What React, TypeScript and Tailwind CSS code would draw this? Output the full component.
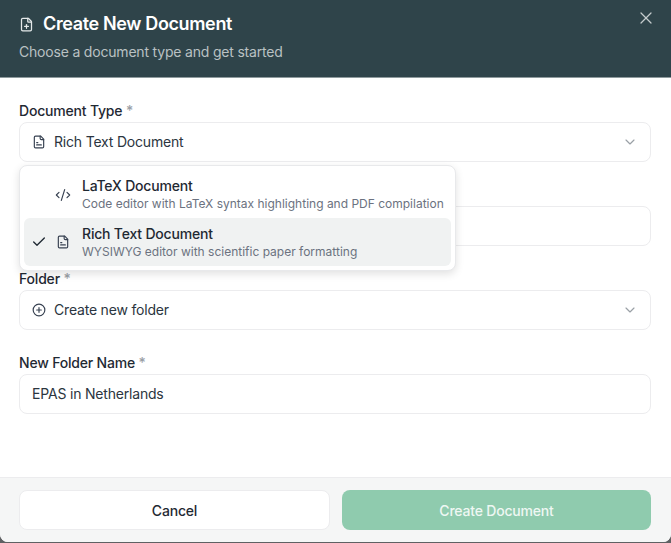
import { Check, ChevronDown, CodeXml, FilePlus, X } from "lucide-react";

function Label({ text }: { text?: string }) {
  return (
    <div className="h-[18px] text-[14px] leading-[18px] font-medium text-[#1f2933]">
      {text ? (
        <>
          {text} <span className="text-[#9aa0a6]">*</span>
        </>
      ) : null}
    </div>
  );
}

function RichIcon({ className }: { className: string }) {
  return (
    <svg viewBox="0 0 24 24" fill="none" stroke="currentColor" strokeWidth="2" strokeLinecap="round" strokeLinejoin="round" className={className}>
      <path d="M15 2H6a2 2 0 0 0-2 2v16a2 2 0 0 0 2 2h12a2 2 0 0 0 2-2V7Z" />
      <path d="M14 2v4a2 2 0 0 0 2 2h4" />
      <path d="M8 17h8" />
      <path d="M8 13h2" />
    </svg>
  );
}

function PlusCircle() {
  return (
    <svg viewBox="0 0 24 24" fill="none" stroke="currentColor" strokeWidth="2" strokeLinecap="round" className="w-[14px] h-[14px] text-[#374151]">
      <circle cx="12" cy="12" r="10" />
      <path d="M8 12h8" />
      <path d="M12 8v8" />
    </svg>
  );
}

function Box({ children }: { children: React.ReactNode }) {
  return (
    <div className="mt-[2px] h-[40px] rounded-[8px] border border-[#ececee] bg-white flex items-center justify-between pl-[12px] pr-[12px] pb-[1px] text-[14px] text-[#2b3540]">
      {children}
    </div>
  );
}

export default function App() {
  return (
    <div className="w-[671px] h-[543px] bg-[#5f6163] overflow-hidden tracking-[-0.012em]" style={{ fontFamily: "Inter, 'Liberation Sans', sans-serif" }}>
      <div className="relative w-[671px] h-[542px] bg-white rounded-b-[8px] overflow-hidden flex flex-col">
        <header className="h-[78px] shrink-0 bg-[#2f444a] border-b border-[#8e9a9d] pl-[19px] pr-[19px] pt-[13px] relative">
          <div className="flex items-center gap-[9px] h-[22px]">
            <FilePlus className="w-[15px] h-[15px] text-[#e5e9ea]" strokeWidth={2} />
            <span className="text-[18px] leading-[22px] font-semibold text-white tracking-[-0.02em]">Create New Document</span>
          </div>
          <div className="mt-[8px] text-[14px] leading-[18px] text-[#b9c1c3]">Choose a document type and get started</div>
          <X className="absolute right-[15px] top-[8px] w-[20px] h-[20px] text-[#c5cccd]" strokeWidth={1.5} />
        </header>

        <main className="flex-1 pl-[19px] pr-[20px] pt-[24px] relative">
          <Label text="Document Type" />
          <Box>
            <span className="flex items-center gap-[8px]">
              <RichIcon className="w-[14px] h-[14px] text-[#374151]" />
              Rich Text Document
            </span>
            <ChevronDown className="w-[16px] h-[16px] text-[#9aa0a6]" strokeWidth={1.75} />
          </Box>

          <div className="mt-[24px]"><Label /></div>
          <Box><span /></Box>

          <div className="mt-[24px]"><Label text="Folder" /></div>
          <Box>
            <span className="flex items-center gap-[8px]">
              <PlusCircle />
              Create new folder
            </span>
            <ChevronDown className="w-[16px] h-[16px] text-[#9aa0a6]" strokeWidth={1.75} />
          </Box>

          <div className="mt-[24px]"><Label text="New Folder Name" /></div>
          <Box>EPAS in Netherlands</Box>

          <div className="absolute left-[19px] top-[87px] w-[437px] h-[106px] bg-white rounded-[8px] border border-[#e8e9eb] shadow-[0_3px_8px_rgba(0,0,0,0.12)] p-[4px]">
            <div className="h-[48px] flex items-center rounded-[6px]">
              <CodeXml className="w-[16px] h-[16px] mt-[1px] ml-[31px] text-[#374151]" strokeWidth={1.75} />
              <div className="ml-[11px]">
                <div className="text-[14px] leading-[18px] font-medium text-[#1f2933]">LaTeX Document</div>
                <div className="text-[12px] leading-[17px] tracking-normal text-[#6b7280]">Code editor with LaTeX syntax highlighting and PDF compilation</div>
              </div>
            </div>
            <div className="h-[48px] flex items-center rounded-[6px] bg-[#f0f2f2]">
              <Check className="w-[16px] h-[16px] ml-[7px] text-[#1f2933]" strokeWidth={2} />
              <RichIcon className="w-[14px] h-[14px] ml-[9px] text-[#374151]" />
              <div className="ml-[12px]">
                <div className="text-[14px] leading-[18px] font-medium text-[#1f2933]">Rich Text Document</div>
                <div className="text-[12px] leading-[17px] tracking-normal text-[#6b7280]">WYSIWYG editor with scientific paper formatting</div>
              </div>
            </div>
          </div>
        </main>

        <footer className="h-[65px] shrink-0 bg-[#f5f6f6] border-t border-[#ececee] pl-[19px] pr-[20px] pt-[12px] flex gap-[12px]">
          <button className="flex-1 h-[40px] rounded-[8px] border border-[#ececee] bg-white text-[14px] font-medium text-[#1f2933]">Cancel</button>
          <button className="flex-1 h-[40px] rounded-[8px] bg-[#8fcbae] text-[14px] font-medium text-[#eef7f3]">Create Document</button>
        </footer>
      </div>
    </div>
  );
}
